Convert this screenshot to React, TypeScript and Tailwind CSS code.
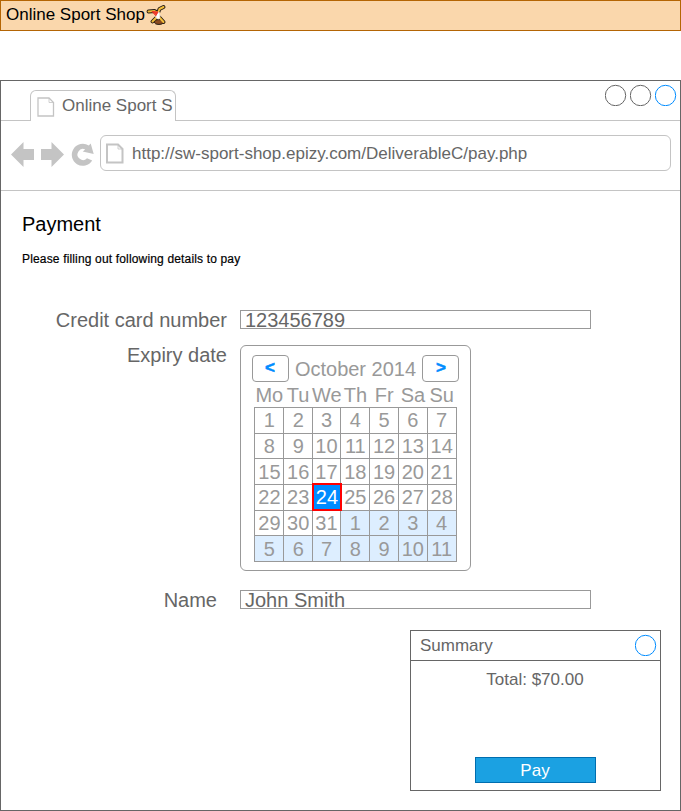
import React from "react";

const WEEKDAYS = ["Mo", "Tu", "We", "Th", "Fr", "Sa", "Su"];

const DAYS = Array.from({ length: 42 }, (_, i) => ({
  label: i < 31 ? i + 1 : i - 30,
  next: i > 30,
  selected: i === 23,
}));

function Page({ className, weight = 1 }: { className: string; weight?: number }) {
  return (
    <svg viewBox="0 0 18 20" className={className} fill="none" stroke="#c4c4c4" strokeWidth={weight}>
      <path d="M1 1H12L16.500 5.500V19H1Z" />
      <path d="M12 1V5.500H16.500" strokeWidth="0.800" />
    </svg>
  );
}

function Circle({ blue = false, className = "" }: { blue?: boolean; className?: string }) {
  return (
    <svg viewBox="0 0 22 22" className={`size-[22px] ${className}`} fill="none">
      <circle cx="10.500" cy="11.500" r="10.200" stroke={blue ? "#008cff" : "#666666"} />
    </svg>
  );
}

function Gymnast() {
  return (
    <svg viewBox="0 0 20 20" className="ml-[1px] size-5" fill="none" strokeLinecap="round" strokeLinejoin="round">
      <path d="M2.500 6.500L8.500 6L12 8L13.500 4L17.500 2M11 12L6.500 16.500M13 12L17.500 17" stroke="#241a12" strokeWidth="3.800" />
      <ellipse cx="13" cy="17" rx="4.500" ry="2.400" fill="#8a4b20" stroke="#241a12" />
      <path d="M2.500 6.500L8.500 6L12 8L13.500 4L17.500 2M11 12L6.500 16.500M13 12L17.500 17" stroke="#f2bd3a" strokeWidth="2" />
      <path d="M9.500 8.500L13 7L14 11L13 14L10.500 13Z" fill="#fff" stroke="#f3e9df" />
      <path d="M6.500 6.500L12 7L10 10.500Z" fill="#ef3928" stroke="#ef3928" />
    </svg>
  );
}

function CalendarButton({ children }: { children: string }) {
  return (
    <button className="h-[27px] w-[37px] rounded-[4px] border border-[#999999] pb-[1px] text-[17px] leading-[24px] font-bold text-[#008cff]">
      <span className="block [-webkit-text-stroke:0.5px_#008cff]">{children}</span>
    </button>
  );
}

function Calendar() {
  return (
    <div className="h-[226px] w-[231px] rounded-[6px] border border-[#999999] pt-[9px] text-[20px] text-[#999999]">
      <div className="ml-[10.500px] flex w-[208px] items-center justify-between">
        <CalendarButton>&lt;</CalendarButton>
        <span className="pt-[2px] leading-[25px] whitespace-nowrap">October 2014</span>
        <CalendarButton>&gt;</CalendarButton>
      </div>
      <div className="ml-[14px] grid h-[25px] w-[201px] grid-cols-7 leading-[27px]">
        {WEEKDAYS.map((day) => (
          <div key={day} className="flex justify-center">{day}</div>
        ))}
      </div>
      <div className="ml-[13px] grid h-[155px] w-[203px] grid-cols-[repeat(7,28.800px)] grid-rows-[repeat(6,25.700px)] border-t border-l border-[#999999]">
        {DAYS.map((day, i) => (
          <div
            key={i}
            className={`relative flex items-center justify-center border-r border-b border-[#999999] ${i % 7 < 2 ? "pl-[1px]" : ""} ${day.next ? "bg-[#ddeeff]" : ""}`}
          >
            {day.selected ? (
              <div className="absolute -top-[2px] -right-[2px] -bottom-[1px] -left-[1px] z-10 flex items-center justify-center border-2 border-[#ff0000] bg-[#008cff] text-white">
                {day.label}
              </div>
            ) : (
              day.label
            )}
          </div>
        ))}
      </div>
    </div>
  );
}

export default function App() {
  return (
    <div className="h-[811px] w-[681px] overflow-hidden bg-white font-['Liberation_Sans',Arial,sans-serif] text-[#666666]">
      <header className="flex h-[31px] items-center border border-[#b46504] bg-[#fad7ac] pb-[2px] pl-[5px] text-[17px] text-black">
        <span>Online Sport Shop</span>
        <Gymnast />
      </header>

      <main className="mt-[49px] h-[731px] border border-[#666666]">
        <div className="flex h-[40px] items-end">
          <div className="w-[29px] self-stretch border-b border-[#c4c4c4]" />
          <div className="flex h-[31px] w-[146px] items-center overflow-hidden rounded-t-[6px] border border-b-0 border-[#c4c4c4] pl-[5.500px] text-[17px] whitespace-nowrap">
            <Page className="mt-[1px] h-5 w-[18px] shrink-0" weight={1.3} />
            <span className="ml-[7.500px]">Online Sport S</span>
          </div>
          <div className="flex flex-1 items-start gap-[3px] self-stretch border-b border-[#c4c4c4] pt-[3px] pl-[429px]">
            <Circle />
            <Circle />
            <Circle blue />
          </div>
        </div>

        <div className="flex h-[70px] items-start border-b border-[#c4c4c4] pt-[14px]">
          <svg viewBox="0 0 94 36" className="h-9 w-[94px]" fill="#c4c4c4">
            <path d="M10 19.500L22.500 7V14H33V25H22.500V32Z" />
            <path d="M63 19.500L50.500 7V14H40V25H50.500V32Z" />
            <path d="M89.700 8.500L92.700 19L81.700 16.500L84.200 14.400A5.500 5.500 0 1 0 86 23.300L91.200 25.500A11 11 0 1 1 87.800 10.600Z" />
          </svg>
          <div className="ml-[5px] flex h-9 w-[571px] items-center rounded-[6px] border border-[#c4c4c4] pl-[5px] text-[17px]">
            <Page className="mt-[1px] h-[21px] w-[18px]" weight={2} />
            <span className="mt-[2px] ml-[8px]">http://sw-sport-shop.epizy.com/DeliverableC/pay.php</span>
          </div>
        </div>

        <h1 className="mt-[21px] ml-[21px] text-[20px] leading-6 text-black">Payment</h1>
        <p className="mt-[16px] ml-[21px] text-[12px] leading-[14px] tracking-[0.160px] text-black [-webkit-text-stroke:0.2px_black]">Please filling out following details to pay</p>

        <div className="mt-[44px] ml-[26px] grid w-[564px] grid-cols-[200px_351px] gap-x-[13px] text-[20px]">
          <label className="h-[35px] text-right leading-[21px]">Credit card number</label>
          <div className="h-[19px] border border-[#999999] pl-[4px] leading-[19px]">123456789</div>
          <label className="text-right leading-[21px]">Expiry date</label>
          <Calendar />
          <label className="mt-[19px] h-[19px] pr-[10px] text-right leading-[21px]">Name</label>
          <div className="mt-[19px] h-[19px] border border-[#999999] pl-[4px] leading-[19px]">John Smith</div>
        </div>

        <section className="mt-[21px] ml-[409px] h-[161px] w-[251px] border border-[#666666] text-[17px]">
          <div className="flex h-[30px] items-center justify-between border-b border-[#666666] pr-[3px] pl-[9px]">
            <span>Summary</span>
            <Circle blue className="mb-[2px]" />
          </div>
          <p className="mt-[9px] pr-[1px] text-center leading-5">Total: $70.00</p>
          <button className="mt-[67px] ml-[64px] block h-[26px] w-[121px] border border-[#006eaf] bg-[#1ba1e2] pt-[1px] pr-[1px] text-[17px] leading-[23px] text-white">Pay</button>
        </section>
      </main>
    </div>
  );
}
